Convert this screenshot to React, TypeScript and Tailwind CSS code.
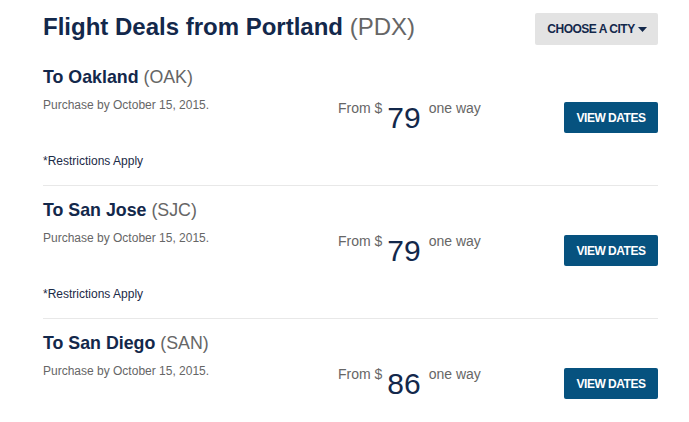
import React from "react";

const deals = [
  { city: "Oakland", code: "OAK", price: "79", restrictions: true },
  { city: "San Jose", code: "SJC", price: "79", restrictions: true },
  { city: "San Diego", code: "SAN", price: "86", restrictions: false },
];

export default function App() {
  return (
    <div
      className="w-[689px] h-[422px] overflow-hidden bg-white pl-[43px] pr-[31px]"
      style={{ fontFamily: '"Liberation Sans", Arial, sans-serif' }}
    >
      <div className="flex items-start justify-between pt-[13px]">
        <h1 className="mt-[2px] text-[24px] leading-[24px] text-[#13284b]">
          <span className="font-bold">Flight Deals from Portland</span>{" "}
          <span className="font-normal text-[#666666]">(PDX)</span>
        </h1>
        <button className="flex h-[32px] w-[123px] items-center justify-center gap-[3px] rounded-[2px] bg-[#e3e3e3] pl-[1px] text-[12px] font-bold tracking-[-0.5px] text-[#13284b]">
          <span>CHOOSE A CITY</span>
          <svg width="9" height="5" viewBox="0 0 9 5" className="mt-[1px]">
            <polygon points="0,0 9,0 4.5,5" fill="#13284b" />
          </svg>
        </button>
      </div>
      <div className="mt-[8px]">
        {deals.map((d, i) => (
          <div
            key={d.code}
            className={
              "pt-[14px] pb-[16px] " + (i < deals.length - 1 ? "border-b border-[#e8e8e8]" : "")
            }
          >
            <div className="text-[17.8px] leading-[20px] text-[#13284b]">
              <span className="font-bold">To {d.city}</span>{" "}
              <span className="text-[#666666]">({d.code})</span>
            </div>
            <div className="mt-[10px] flex items-start">
              <div className="w-[295px] text-[12px] leading-[16px] text-[#666666]">
                Purchase by October 15, 2015.
              </div>
              <div className="mt-[3px] flex items-start">
                <span className="text-[14px] leading-[16px] text-[#666666]">From $</span>
                <span className="ml-[5px] mt-[3px] text-[30px] leading-[30px] text-[#13284b]">
                  {d.price}
                </span>
                <span className="ml-[8px] text-[14px] leading-[16px] text-[#666666]">one way</span>
              </div>
              <button className="ml-auto mt-[5px] mb-[1px] flex h-[31px] w-[94px] items-center justify-center rounded-[2px] bg-[#06527f] text-[12px] font-bold tracking-[-0.5px] text-white">
                VIEW DATES
              </button>
            </div>
            {d.restrictions && (
              <div className="mt-[19px] text-[12px] leading-[16px] text-[#1b2a47]">
                *Restrictions Apply
              </div>
            )}
          </div>
        ))}
      </div>
    </div>
  );
}
